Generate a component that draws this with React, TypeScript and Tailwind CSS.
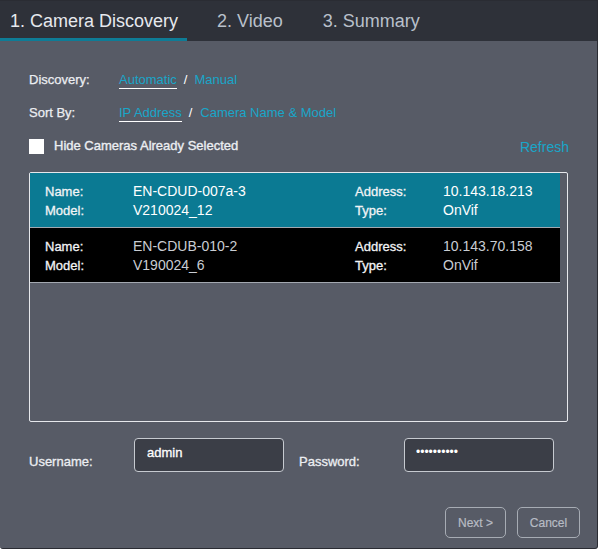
import { useState } from 'react';

interface Camera {
    name: string;
    model: string;
    address: string;
    type: string;
}

const cameras: Camera[] = [
    { name: 'EN-CDUD-007a-3', model: 'V210024_12', address: '10.143.18.213', type: 'OnVif' },
    { name: 'EN-CDUB-010-2', model: 'V190024_6', address: '10.143.70.158', type: 'OnVif' },
];

const tabs = ['1. Camera Discovery', '2. Video', '3. Summary'];

export default function App() {
    const [selected, setSelected] = useState(0);
    const [hideSelected, setHideSelected] = useState(false);

    return (
        <div
            className="w-[598px] h-[549px] flex flex-col bg-[#575b66] border-t border-r border-b border-[#2a2c33] rounded-b-[3px] overflow-hidden text-white"
            style={{ fontFamily: '"Liberation Sans", Arial, sans-serif' }}
        >
            {/* Tabs */}
            <div className="h-[40px] shrink-0 bg-[#2e3139] flex items-stretch gap-[20px]">
                {tabs.map((t, i) => (
                    <div
                        key={t}
                        className={`flex items-center whitespace-nowrap text-[18px] ${
                            i === 0
                                ? 'w-[187px] pl-[10px] text-[#e6e9ee] border-b-[3px] border-[#0e7c96] pt-[3px]'
                                : 'px-[10px] text-[#b9c0cb]'
                        }`}
                    >
                        {t}
                    </div>
                ))}
            </div>

            {/* Body */}
            <div className="flex-1 flex flex-col pl-[29px] pr-[29px]">
                <div className="flex items-center h-[20px] mt-[29px] text-[13px]">
                    <span className="w-[90px] text-[#eceef2] [-webkit-text-stroke:0.25px_#eceef2]">Discovery:</span>
                    <span className="text-[#19a6c9] border-b border-white leading-[16px]">Automatic</span>
                    <span className="mx-[7px] text-white">/</span>
                    <span className="text-[#19a6c9]">Manual</span>
                </div>
                <div className="flex items-center h-[20px] mt-[13px] text-[13px]">
                    <span className="w-[90px] text-[#eceef2] [-webkit-text-stroke:0.25px_#eceef2]">Sort By:</span>
                    <span className="text-[#19a6c9] border-b border-white leading-[16px]">IP Address</span>
                    <span className="mx-[7px] text-white">/</span>
                    <span className="text-[#19a6c9] ml-[1px]">Camera Name &amp; Model</span>
                </div>
                <div className="flex items-center justify-between h-[20px] mt-[13px]">
                    <label className="flex items-center gap-[10px] cursor-pointer">
                        <span
                            onClick={() => setHideSelected(!hideSelected)}
                            className="w-[15px] h-[15px] bg-white flex items-center justify-center text-[11px] text-[#0e7c96]"
                        >
                            {hideSelected ? '✓' : ''}
                        </span>
                        <span className="text-[13px] text-[#eceef2] [-webkit-text-stroke:0.35px_#eceef2]">
                            Hide Cameras Already Selected
                        </span>
                    </label>
                    <span className="text-[14px] text-[#19a6c9] mt-[2px] mr-[-1px]">Refresh</span>
                </div>

                {/* Camera list */}
                <div className="mt-[16px] h-[250px] border border-[#e6e8ec] rounded-[2px] pr-[7px]">
                    {cameras.map((c, i) => {
                        const active = i === selected;
                        return (
                            <div
                                key={c.name}
                                onClick={() => setSelected(i)}
                                className={`h-[55px] flex items-center pl-[15px] pt-[1px] border-b border-[#a3a8b0] ${
                                    active ? 'bg-[#0b7a93]' : 'bg-black'
                                }`}
                            >
                                <div className="flex flex-col w-[88px] text-[13px] text-[#f2f3f5] leading-[19px] [-webkit-text-stroke:0.3px_#f2f3f5]">
                                    <span>Name:</span>
                                    <span>Model:</span>
                                </div>
                                <div
                                    className={`flex flex-col w-[222px] leading-[19px] text-[14px] ${
                                        active ? 'text-white' : 'text-[#c9cdd3]'
                                    }`}
                                >
                                    <span>{c.name}</span>
                                    <span>{c.model}</span>
                                </div>
                                <div className="flex flex-col w-[88px] text-[13px] text-[#f2f3f5] leading-[19px] [-webkit-text-stroke:0.3px_#f2f3f5]">
                                    <span>Address:</span>
                                    <span>Type:</span>
                                </div>
                                <div
                                    className={`flex flex-col leading-[19px] text-[14px] ${
                                        active ? 'text-white' : 'text-[#c9cdd3]'
                                    }`}
                                >
                                    <span>{c.address}</span>
                                    <span>{c.type}</span>
                                </div>
                            </div>
                        );
                    })}
                </div>

                {/* Credentials */}
                <div className="flex items-center mt-[16px] text-[13px]">
                    <span className="w-[105px] text-[#eceef2] mt-[13px] [-webkit-text-stroke:0.3px_#eceef2]">Username:</span>
                    <input
                        defaultValue="admin"
                        className="w-[150px] h-[34px] rounded-[4px] bg-[#3b3e47] border border-[#c6cad0] px-[12px] pb-[6px] text-[13px] text-white outline-none [-webkit-text-stroke:0.3px_white]"
                    />
                    <span className="w-[105px] ml-[15px] text-[#eceef2] mt-[13px] [-webkit-text-stroke:0.3px_#eceef2]">Password:</span>
                    <input
                        type="password"
                        defaultValue="password12"
                        className="w-[150px] h-[34px] rounded-[4px] bg-[#3b3e47] border border-[#c6cad0] px-[11px] pb-[6px] text-[12px] text-white outline-none"
                    />
                </div>

                {/* Footer */}
                <div className="flex justify-end gap-[11px] mt-[35px] mr-[-12px]">
                    <button className="w-[61px] h-[31px] rounded-[5px] border border-[#a7acb4] text-[12px] text-[#b7bcc4] [-webkit-text-stroke:0.2px_#b7bcc4]">
                        Next &gt;
                    </button>
                    <button className="w-[63px] h-[31px] rounded-[5px] border border-[#a7acb4] text-[12px] text-[#b7bcc4] [-webkit-text-stroke:0.2px_#b7bcc4]">
                        Cancel
                    </button>
                </div>
            </div>
        </div>
    );
}
